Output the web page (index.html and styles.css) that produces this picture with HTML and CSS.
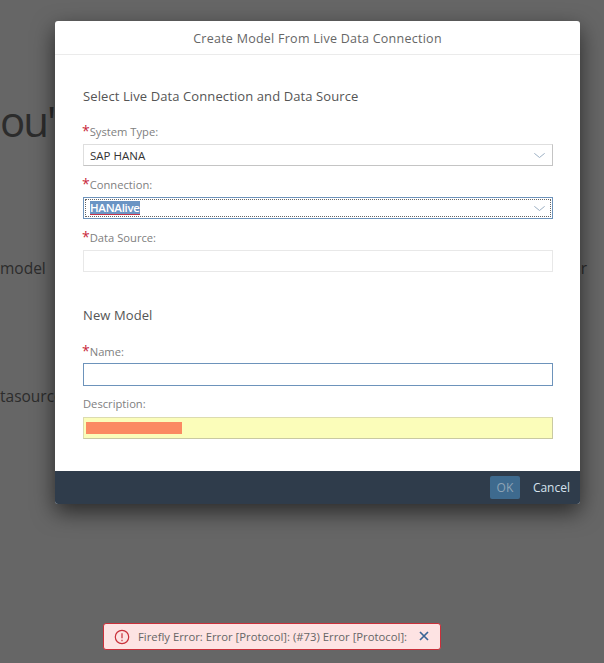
FILE: index.html
```html
<!DOCTYPE html>
<html lang="en">
<head>
<meta charset="utf-8">
<title>Create Model From Live Data Connection</title>
<link rel="stylesheet" href="styles.css">
</head>
<body>
<main class="backdrop">
  <p class="bg-heading">ou'</p>
  <div class="bg-row bg-row-first"><span>model</span><span>r</span></div>
  <div class="bg-row bg-row-second"><span>tasource</span></div>
</main>

<section class="dialog">
  <header class="dialog-header">Create Model From Live Data Connection</header>
  <div class="dialog-body">
    <h2 class="section-title">Select Live Data Connection and Data Source</h2>
    <label class="label label-first"><span class="req">*</span>System Type:</label>
    <div class="field select">
      <span>SAP HANA</span>
      <svg class="chev" viewBox="0 0 11 5"><path d="M.3.3l5.2 4.2L10.7.3"/></svg>
    </div>
    <label class="label"><span class="req">*</span>Connection:</label>
    <div class="field select focus">
      <span class="dots"><span class="selected">HANAlive</span></span>
      <svg class="chev" viewBox="0 0 11 5"><path d="M.3.3l5.2 4.2L10.7.3"/></svg>
    </div>
    <label class="label"><span class="req">*</span>Data Source:</label>
    <div class="field disabled"></div>
    <h2 class="section-title section-second">New Model</h2>
    <label class="label label-name"><span class="req">*</span>Name:</label>
    <div class="field name"></div>
    <label class="label">Description:</label>
    <div class="field autofill"><span class="redaction"></span></div>
  </div>
  <footer class="dialog-footer">
    <span class="btn-ok">OK</span>
    <span class="btn-cancel">Cancel</span>
  </footer>
</section>

<div class="toast">
  <svg class="toast-icon" viewBox="0 0 16 16"><circle cx="8" cy="8" r="6.7"/><path d="M8 4.2v5M8 10.8v1.4"/></svg>
  <span class="toast-text">Firefly Error: Error [Protocol]: (#73) Error [Protocol]:</span>
  <svg class="toast-close" viewBox="0 0 10 10"><path d="M1 1l8 8M9 1l-8 8"/></svg>
</div>
</body>
</html>
```
FILE: styles.css
```css
* { box-sizing: border-box; }
html, body { margin: 0; height: 100%; }
body {
  background: #666;
  font-family: "Open Sans", "Liberation Sans", sans-serif;
  overflow: hidden;
  position: relative;
  height: 663px;
}
.backdrop { color: #2c2c2c; padding-top: 93px; }
.bg-heading { margin: 0; font-size: 42px; line-height: 56px; letter-spacing: -2px; }
.bg-row {
  display: flex;
  justify-content: space-between;
  font-size: 15.5px;
  line-height: 20px;
}
.bg-row-first { margin-top: 109px; padding-right: 17px; }
.bg-row-second { margin-top: 108px; }

.dialog {
  position: absolute;
  left: 55px;
  top: 21px;
  width: 525px;
  height: 483px;
  background: #fff;
  border-radius: 3px;
  box-shadow: 0 8px 22px rgba(0, 0, 0, .6);
  display: flex;
  flex-direction: column;
}
.dialog-header {
  height: 34px;
  padding-top: 1px;
  border-bottom: 1px solid #ebebeb;
  text-align: center;
  font-size: 12.5px;
  line-height: 33px;
  color: #666;
  letter-spacing: .26px;
}
.dialog-body { flex: 1; padding: 0 27px 0 28px; }
.section-title {
  margin: 32px 0 0;
  font-size: 13px;
  font-weight: 400;
  line-height: 18px;
  color: #555;
  letter-spacing: .1px;
}
.section-second { margin-top: 34px; }
.label {
  display: block;
  font-size: 11.2px;
  line-height: 14px;
  color: #808080;
  margin: 0 0 6px;
  height: 14px;
}
.label-first { margin-top: 19px; }
.label-name { margin-top: 20px; margin-bottom: 5px; }
.req { color: #c8293a; font-size: 14px; line-height: 14px; margin-left: -1px; }
.field {
  height: 22px;
  border: 1px solid #dedede;
  border-bottom-color: #c4c4c4;
  border-right-color: #c4c4c4;
  background: #fff;
  display: flex;
  align-items: center;
  justify-content: space-between;
  font-size: 11.5px;
  color: #333;
  padding: 0 7px 0 6px;
  position: relative;
  margin-bottom: 11px;
}
.focus { border-color: #6d93bb; padding: 1px; align-items: stretch; }
.focus .dots {
  flex: 1;
  border: 1px dotted #666;
  display: flex;
  align-items: center;
  padding-left: 4px;
}
.selected {
  background: #6a94c4;
  color: #fff;
  line-height: 13px;
  border-bottom: 1px solid #c3354a;
  font-weight: 600;
  letter-spacing: -.3px;
}
.focus .chev { position: absolute; right: 7px; top: 8px; }
.chev { width: 11px; height: 5px; fill: none; stroke: #9db0c4; stroke-width: 1; }
.disabled { border-color: #e8e8e8; }
.name { height: 23px; border-color: #6d93bb; }
.autofill { background: #fbfdba; border-color: #dcdcb0; border-bottom-color: #c9c9a2; border-right-color: #c9c9a2; padding: 0 2px; }
.redaction { width: 96px; height: 12px; background: #fb8a62; }

.dialog-footer {
  height: 33px;
  background: #2f3c4b;
  border-radius: 0 0 3px 3px;
  display: flex;
  align-items: center;
  justify-content: flex-end;
  padding-right: 10px;
  gap: 13px;
  font-size: 12px;
}
.btn-ok {
  width: 30px;
  height: 23px;
  border-radius: 2px;
  background: #3e6a8e;
  color: #8da3b5;
  text-align: center;
  line-height: 23px;
}
.btn-cancel { color: #d5e2ee; }

.toast {
  position: absolute;
  left: 103px;
  top: 623px;
  width: 338px;
  height: 27px;
  background: #fde3e3;
  border: 1px solid #c9303a;
  border-radius: 3px;
  display: flex;
  align-items: center;
  padding-left: 10px;
  font-size: 11.3px;
  color: #666;
}
.toast-icon { width: 16px; height: 16px; fill: none; stroke: #c9303a; stroke-width: 1.2; flex: none; }
.toast-text { margin-left: 8px; white-space: nowrap; }
.toast-close { width: 10px; height: 10px; margin-left: 12px; margin-top: -2px; fill: none; stroke: #3a6596; stroke-width: 1.7; flex: none; }
```
